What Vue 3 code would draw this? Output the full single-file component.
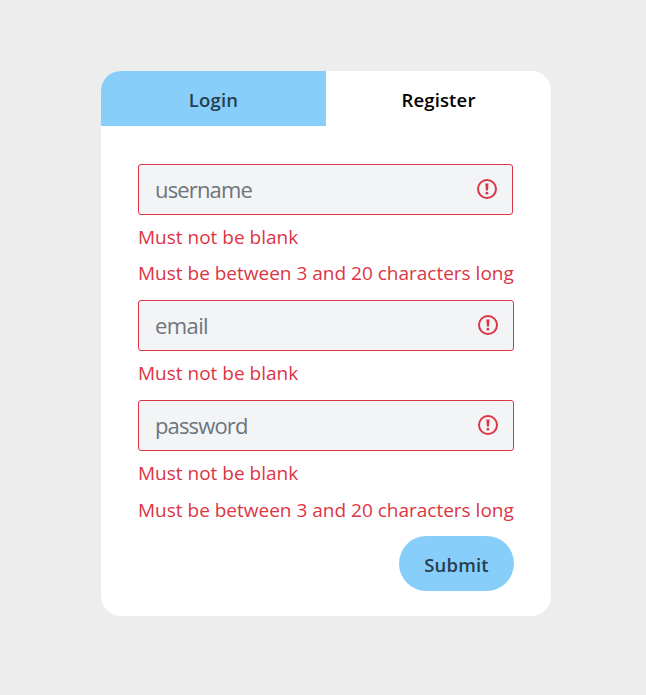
<script setup>
const fields = [
  { name: 'username', type: 'text', errors: ['Must not be blank', 'Must be between 3 and 20 characters long'] },
  { name: 'email', type: 'email', errors: ['Must not be blank'] },
  { name: 'password', type: 'password', errors: ['Must not be blank', 'Must be between 3 and 20 characters long'] },
]
</script>

<template>
  <main class="page">
    <section class="card">
      <nav class="tabs">
        <button class="tab tab-login" type="button">Login</button>
        <button class="tab tab-register" type="button">Register</button>
      </nav>
      <form class="form" novalidate @submit.prevent>
        <div v-for="field in fields" :key="field.name" class="field" :class="field.name">
          <div class="control">
            <input class="input" :class="'input-' + field.name" :type="field.type" :placeholder="field.name" />
            <svg class="icon" viewBox="0 0 20 20" aria-hidden="true">
              <circle cx="10" cy="10" r="9" fill="none" stroke="#dc3545" stroke-width="2" />
              <path d="M8.3 4.4h3.2l-.5 7.1H8.9z" fill="#dc3545" />
              <circle cx="9.9" cy="14.2" r="1.35" fill="#dc3545" />
            </svg>
          </div>
          <p v-for="error in field.errors" :key="error" class="error">{{ error }}</p>
        </div>
        <button class="submit" type="submit">Submit</button>
      </form>
    </section>
  </main>
</template>

<style>
body {
  background: #ededed;
}
</style>

<style scoped>
.page {
  box-sizing: border-box;
  min-height: 695px;
  padding: 71px 0 0 101px;
  font-family: "Segoe UI", "Open Sans", "Noto Sans", sans-serif;
}
.card {
  width: 450px;
  height: 545px;
  overflow: hidden;
  border-radius: 20px;
  background: #fff;
}
.tabs {
  display: grid;
  grid-template-columns: 1fr 1fr;
  height: 55px;
}
.tab,
.submit {
  margin: 0;
  padding: 1px 0 0;
  border: 0;
  font: 600 18.5px/27px "Segoe UI", "Open Sans", "Noto Sans", sans-serif;
  letter-spacing: 0.15px;
}
.tab-login {
  background: #87cefa;
  color: #263f4d;
}
.tab-register {
  background: #fff;
  color: #000;
}
.form {
  display: flex;
  flex-direction: column;
  padding: 38px 37px 0;
}
.control {
  display: grid;
  align-items: center;
  height: 51px;
  margin-bottom: 4px;
}
.username .control {
  width: 375px;
}
.input,
.icon {
  grid-area: 1 / 1;
}
.input {
  box-sizing: border-box;
  width: 100%;
  height: 51px;
  margin: 0;
  padding: 0 50px 2px 16px;
  border: 1px solid #dc3545;
  border-radius: 3px;
  outline: 0;
  background: #f2f4f6;
  font: 400 22px/30px "Segoe UI", "Open Sans", "Noto Sans", sans-serif;
  letter-spacing: -0.85px;
}
.input-email {
  letter-spacing: -0.6px;
}
.input::placeholder {
  color: #6c757d;
  opacity: 1;
}
.icon {
  justify-self: end;
  width: 20px;
  height: 20px;
  margin: 0 16px 1px 0;
}
.error {
  height: 36px;
  margin: 0;
  color: #dc3545;
  font-size: 19px;
  line-height: 36px;
  white-space: nowrap;
}
.username {
  height: 136px;
}
.email {
  height: 100px;
}
.password {
  height: 136px;
}
.password .error + .error {
  padding-top: 1px;
}
.submit {
  align-self: flex-end;
  width: 115px;
  height: 55px;
  border-radius: 28px;
  background: #87cefa;
  color: #263f4d;
}
</style>
